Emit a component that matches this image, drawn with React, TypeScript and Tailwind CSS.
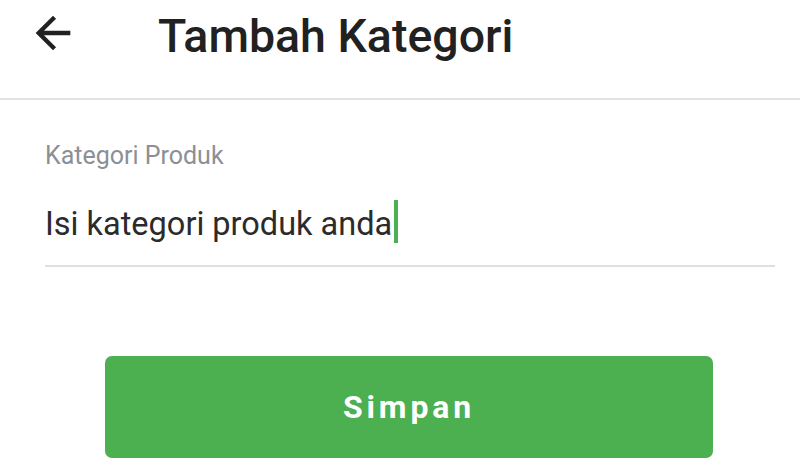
export default function App() {
  return (
    <div className="w-[800px] h-[460px] overflow-hidden bg-white font-['Roboto',sans-serif]">
      {/* Toolbar */}
      <div className="h-[100px] flex items-start border-b-2 border-[#e3e3e3]">
        <svg className="ml-[27px] mt-[7px] shrink-0" width="52" height="52" viewBox="0 0 24 24" fill="#212121">
          <path d="M20 11H7.83l5.59-5.59L12 4l-8 8 8 8 1.41-1.41L7.83 13H20v-2z" />
        </svg>
        <h1 className="ml-[79px] mt-[13px] text-[46.5px] leading-[47px] font-medium text-[#212121]">Tambah Kategori</h1>
      </div>

      {/* Form */}
      <div className="pl-[45px] pr-[25px] pt-[43px]">
        <label className="block text-[25px] leading-[25px] text-[#8b9096]">Kategori Produk</label>
        <div className="mt-[32px] flex items-start border-b-2 border-[#e0e0e0] pb-[22px]">
          <span className="mt-[8px] text-[32.5px] leading-[32px] text-[#2b2b2b]">Isi kategori produk anda</span>
          <span className="ml-[2px] w-[4px] h-[43px] bg-[#4caf50]" />
        </div>
      </div>

      <div className="pl-[105px] pt-[89px]">
        <button className="w-[608px] h-[102px] rounded-[7px] bg-[#4caf50] text-white text-[32px] font-bold tracking-[0.12em]">
          Simpan
        </button>
      </div>
    </div>
  );
}
